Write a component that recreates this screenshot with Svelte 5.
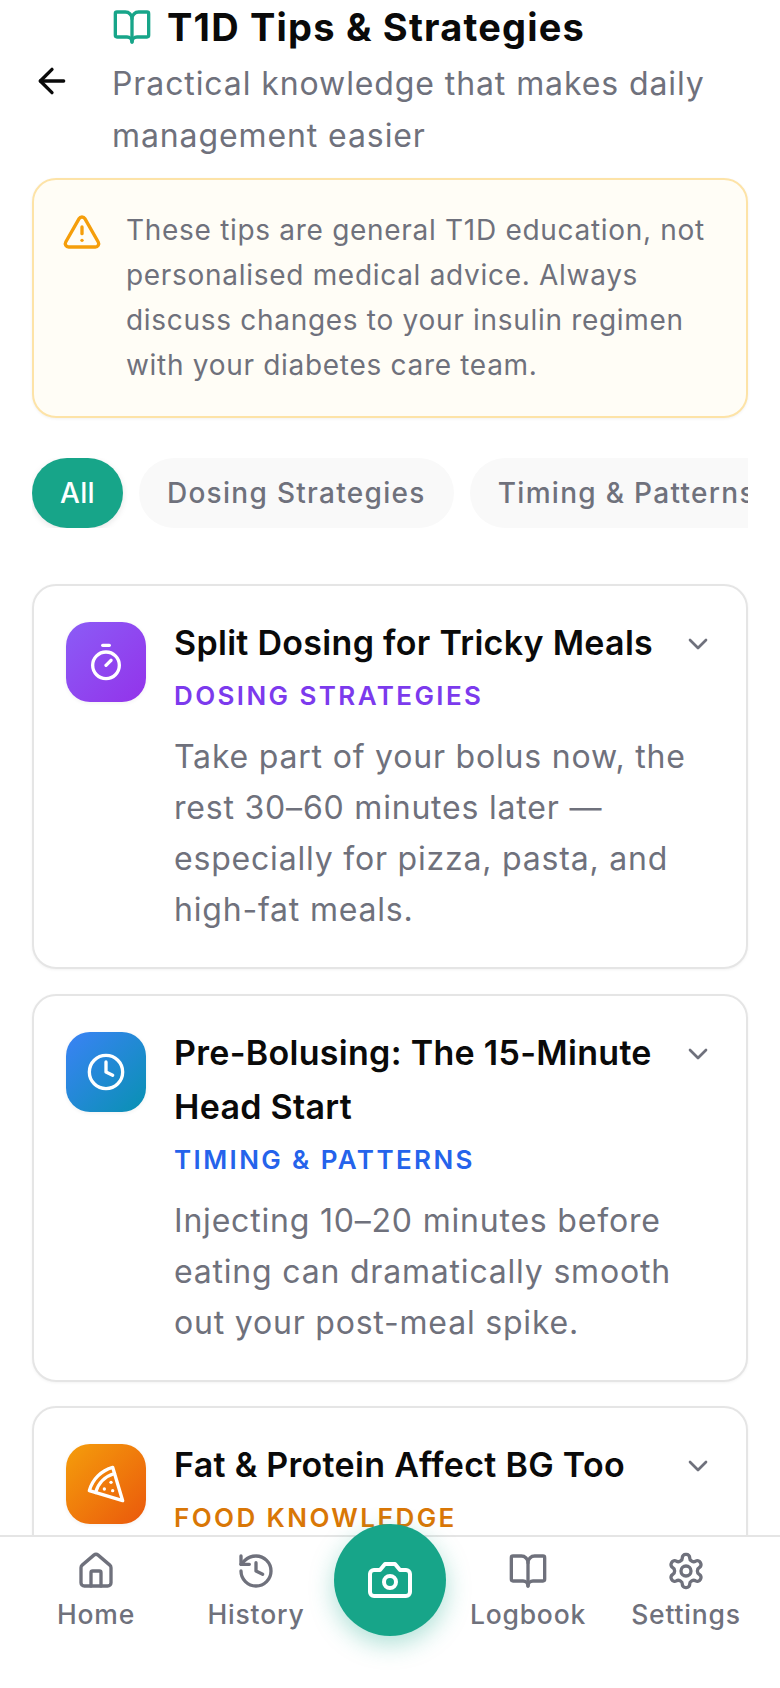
<script>
  const tips = [
    { title: 'Split Dosing for Tricky Meals', cat: 'Dosing Strategies', tone: 'violet', icon: 'timer', desc: 'Take part of your bolus now, the rest 30–60 minutes later — especially for pizza, pasta, and high-fat meals.' },
    { title: 'Pre-Bolusing: The 15-Minute Head Start', cat: 'Timing & Patterns', tone: 'blue', icon: 'clock', desc: 'Injecting 10–20 minutes before eating can dramatically smooth out your post-meal spike.' },
    { title: 'Fat & Protein Affect BG Too', cat: 'Food Knowledge', tone: 'orange', icon: 'pizza', desc: '' }
  ];
  const chips = ['All', 'Dosing Strategies', 'Timing & Patterns'];
</script>

{#snippet book()}
  <path d="M12 7v14" /><path d="M3 18a1 1 0 0 1-1-1V4a1 1 0 0 1 1-1h5a4 4 0 0 1 4 4 4 4 0 0 1 4-4h5a1 1 0 0 1 1 1v13a1 1 0 0 1-1 1h-6a3 3 0 0 0-3 3 3 3 0 0 0-3-3z" />
{/snippet}

<div class="screen">
  <header class="head">
    <button class="back" aria-label="Back">
      <svg class="ic" width="40" height="40" viewBox="0 0 24 24"><path d="m12 19-7-7 7-7" /><path d="M19 12H5" /></svg>
    </button>
    <div class="head-text">
      <div class="title-row">
        <svg class="ic book" width="40" height="40" viewBox="0 0 24 24">{@render book()}</svg>
        <h1>T1D Tips &amp; Strategies</h1>
      </div>
      <p class="sub">Practical knowledge that makes daily management easier</p>
    </div>
  </header>

  <section class="warn">
    <svg class="ic warn-ic" width="40" height="40" viewBox="0 0 24 24"><path d="m21.73 18-8-14a2 2 0 0 0-3.48 0l-8 14A2 2 0 0 0 4 21h16a2 2 0 0 0 1.73-3" /><path d="M12 9v4" /><path d="M12 17h.01" /></svg>
    <p>These tips are general T1D education, not personalised medical advice. Always discuss changes to your insulin regimen with your diabetes care team.</p>
  </section>

  <div class="chips">
    {#each chips as c, i}
      <span class="chip" class:on={i === 0}>{c}</span>
    {/each}
  </div>

  <div class="cards">
    {#each tips as t}
      <article class="card">
        <div class="tile {t.tone}">
          <svg class="ic" width="40" height="40" viewBox="0 0 24 24">
            {#if t.icon === 'timer'}
              <line x1="10" x2="14" y1="2" y2="2" /><line x1="12" x2="15" y1="14" y2="11" /><circle cx="12" cy="14" r="8" />
            {:else if t.icon === 'clock'}
              <circle cx="12" cy="12" r="10" /><polyline points="12 6 12 12 16 14" />
            {:else}
              <path d="M15 11h.01" /><path d="M11 15h.01" /><path d="M16 16h.01" /><path d="m2 16 20 6-6-20A20 20 0 0 0 2 16" /><path d="M5.71 17.11a17.04 17.04 0 0 1 11.4-11.42" />
            {/if}
          </svg>
        </div>
        <div class="body">
          <div class="top">
            <div class="heading">
              <h2>{t.title}</h2>
              <div class="cat {t.tone}">{t.cat}</div>
            </div>
            <svg class="ic chev" width="32" height="32" viewBox="0 0 24 24"><path d="m6 9 6 6 6-6" /></svg>
          </div>
          {#if t.desc}<p>{t.desc}</p>{/if}
        </div>
      </article>
    {/each}
  </div>

  <nav class="nav">
    <div class="item">
      <svg class="ic" width="40" height="40" viewBox="0 0 24 24"><path d="M15 21v-8a1 1 0 0 0-1-1h-4a1 1 0 0 0-1 1v8" /><path d="M3 10a2 2 0 0 1 .709-1.528l7-5.999a2 2 0 0 1 2.582 0l7 5.999A2 2 0 0 1 21 10v9a2 2 0 0 1-2 2H5a2 2 0 0 1-2-2z" /></svg>
      <span>Home</span>
    </div>
    <div class="item">
      <svg class="ic" width="40" height="40" viewBox="0 0 24 24"><path d="M3 12a9 9 0 1 0 9-9 9.75 9.75 0 0 0-6.74 2.74L3 8" /><path d="M3 3v5h5" /><path d="M12 7v5l4 2" /></svg>
      <span>History</span>
    </div>
    <div class="fab-slot">
      <button class="fab" aria-label="Scan">
        <svg class="ic" width="48" height="48" viewBox="0 0 24 24"><path d="M14.5 4h-5L7 7H4a2 2 0 0 0-2 2v9a2 2 0 0 0 2 2h16a2 2 0 0 0 2-2V9a2 2 0 0 0-2-2h-3l-2.5-3z" /><circle cx="12" cy="13" r="3" /></svg>
      </button>
    </div>
    <div class="item">
      <svg class="ic" width="40" height="40" viewBox="0 0 24 24">{@render book()}</svg>
      <span>Logbook</span>
    </div>
    <div class="item">
      <svg class="ic" width="40" height="40" viewBox="0 0 24 24"><path d="M12.22 2h-.44a2 2 0 0 0-2 2v.18a2 2 0 0 1-1 1.73l-.43.25a2 2 0 0 1-2 0l-.15-.08a2 2 0 0 0-2.73.73l-.22.38a2 2 0 0 0 .73 2.73l.15.1a2 2 0 0 1 1 1.72v.51a2 2 0 0 1-1 1.74l-.15.09a2 2 0 0 0-.73 2.73l.22.38a2 2 0 0 0 2.73.73l.15-.08a2 2 0 0 1 2 0l.43.25a2 2 0 0 1 1 1.73V20a2 2 0 0 0 2 2h.44a2 2 0 0 0 2-2v-.18a2 2 0 0 1 1-1.73l.43-.25a2 2 0 0 1 2 0l.15.08a2 2 0 0 0 2.73-.73l.22-.39a2 2 0 0 0-.73-2.73l-.15-.08a2 2 0 0 1-1-1.74v-.5a2 2 0 0 1 1-1.74l.15-.09a2 2 0 0 0 .73-2.73l-.22-.38a2 2 0 0 0-2.73-.73l-.15.08a2 2 0 0 1-2 0l-.43-.25a2 2 0 0 1-1-1.73V4a2 2 0 0 0-2-2z" /><circle cx="12" cy="12" r="3" /></svg>
      <span>Settings</span>
    </div>
  </nav>
</div>

<style>
  :global(body) { margin: 0; background: #fff; }
  .screen {
    position: relative;
    width: 780px;
    height: 1688px;
    overflow: hidden;
    background: #fff;
    font-family: Inter, "Noto Sans", sans-serif;
    color: #0a0a0a;
  }
  .ic { fill: none; stroke: currentColor; stroke-width: 2; stroke-linecap: round; stroke-linejoin: round; flex: none; display: block; }

  .head { display: flex; align-items: center; gap: 40px; padding: 0 32px; }
  .back { width: 40px; height: 40px; padding: 0; border: 0; background: none; color: #0a0a0a; flex: none; }
  .title-row { display: flex; align-items: center; gap: 15px; }
  .book { color: #17a589; }
  h1 { margin: 0; font-size: 38px; line-height: 54px; font-weight: 700; letter-spacing: 1.2px; }
  .sub { margin: 4px 0 0; font-size: 32px; line-height: 52px; color: #6f717c; letter-spacing: 0.9px; width: 620px; }

  .warn {
    display: flex; gap: 24px; margin: 16px 32px 0; padding: 28px;
    background: #fffdf6; border: 2px solid #fde3a7; border-radius: 24px;
    box-shadow: 0 1px 3px rgba(0,0,0,.06);
  }
  .warn-ic { color: #f59e0b; margin-top: 4px; }
  .warn p { margin: 0; font-size: 28px; line-height: 45px; color: #6f717c; letter-spacing: 0.7px; }

  .chips { display: flex; gap: 16px; margin: 40px 32px 0; overflow: hidden; }
  .chip {
    flex: none; height: 70px; box-sizing: border-box; padding: 0 28px;
    display: flex; align-items: center;
    background: #f9f9f9; color: #6f717c; border-radius: 36px;
    font-size: 28px; letter-spacing: 1.3px; font-weight: 500;
  }
  .chip.on { background: #17a589; color: #fff; letter-spacing: 0.3px; box-shadow: 0 2px 6px rgba(0,0,0,.1); }

  .cards { display: flex; flex-direction: column; gap: 24.5px; margin: 56px 32px 0; }
  .card {
    display: flex; align-items: flex-start; gap: 28px; padding: 30px 32px 32px;
    border: 2px solid #e5e5e5; border-radius: 24px; background: #fff;
    box-shadow: 0 1px 3px rgba(0,0,0,.05);
  }
  .tile {
    width: 80px; height: 80px; border-radius: 24px; flex: none; margin-top: 6px;
    display: flex; align-items: center; justify-content: center; color: #fff;
    box-shadow: 0 1px 4px rgba(0,0,0,.06);
  }
  .tile.violet { background: linear-gradient(135deg, #8b5cf6, #9333ea); }
  .tile.blue { background: linear-gradient(135deg, #3b82f6, #0891b2); }
  .tile.orange { background: linear-gradient(135deg, #f59e0b, #ea580c); }
  .body { flex: 1; min-width: 0; }
  .top { display: flex; align-items: flex-start; }
  .heading { flex: 1; min-width: 0; }
  h2 { margin: 0; font-size: 34px; line-height: 54px; font-weight: 600; letter-spacing: 0.3px; }
  .cat { font-size: 26px; line-height: 36px; font-weight: 600; letter-spacing: 2.4px; text-transform: uppercase; margin-top: 8px; }
  .cat.violet { color: #7c3aed; }
  .cat.blue { color: #2563eb; }
  .cat.orange { color: #d97706; }
  .body p { margin: 17px 0 0; font-size: 32px; line-height: 51px; color: #6f717c; letter-spacing: 0.8px; }
  .chev { color: #6f717c; margin-top: 12px; }

  .nav {
    position: absolute; left: 0; right: 0; bottom: 0; height: 153px; box-sizing: border-box;
    display: grid; grid-template-columns: 192px 128px 140px 136px 180px;
    background: #fff; border-top: 2px solid #e5e5e5;
  }
  .item { display: flex; flex-direction: column; align-items: center; color: #6f717c; padding-top: 14px; }
  .item span { font-size: 26.5px; line-height: 40px; margin-top: 3px; letter-spacing: 0.8px; font-weight: 500; white-space: nowrap; }
  .fab-slot { display: flex; justify-content: center; }
  .fab {
    width: 112px; height: 112px; border-radius: 50%; border: 0; padding: 0; margin-top: -13px;
    background: #17a589; color: #fff; display: flex; align-items: center; justify-content: center;
    box-shadow: 0 8px 24px rgba(23,165,137,.35);
  }
</style>
